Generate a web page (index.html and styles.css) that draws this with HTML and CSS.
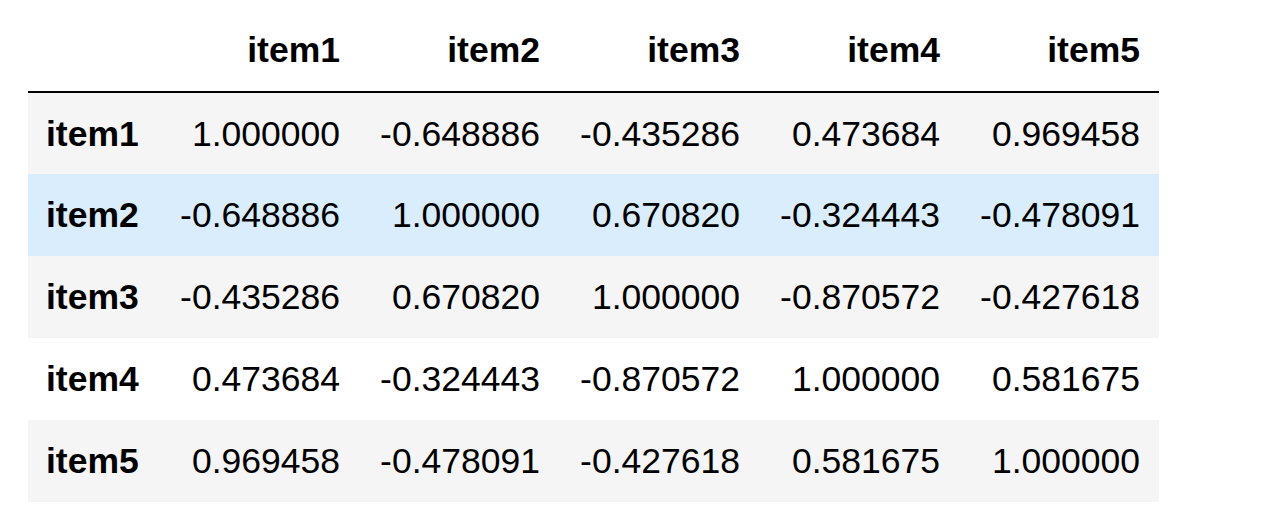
FILE: index.html
```html
<!DOCTYPE html>
<html>
<head>
<meta charset="utf-8">
<link rel="stylesheet" href="styles.css">
</head>
<body>
<div class="frame">
<table class="df">
  <colgroup>
    <col class="c-index">
    <col class="c-data"><col class="c-data"><col class="c-data"><col class="c-data"><col class="c-data">
  </colgroup>
  <thead>
    <tr>
      <th class="corner"></th>
      <th>item1</th>
      <th>item2</th>
      <th>item3</th>
      <th>item4</th>
      <th>item5</th>
    </tr>
  </thead>
  <tbody>
    <tr>
      <th>item1</th>
      <td>1.000000</td><td>-0.648886</td><td>-0.435286</td><td>0.473684</td><td>0.969458</td>
    </tr>
    <tr class="hover">
      <th>item2</th>
      <td>-0.648886</td><td>1.000000</td><td>0.670820</td><td>-0.324443</td><td>-0.478091</td>
    </tr>
    <tr>
      <th>item3</th>
      <td>-0.435286</td><td>0.670820</td><td>1.000000</td><td>-0.870572</td><td>-0.427618</td>
    </tr>
    <tr>
      <th>item4</th>
      <td>0.473684</td><td>-0.324443</td><td>-0.870572</td><td>1.000000</td><td>0.581675</td>
    </tr>
    <tr>
      <th>item5</th>
      <td>0.969458</td><td>-0.478091</td><td>-0.427618</td><td>0.581675</td><td>1.000000</td>
    </tr>
  </tbody>
</table>
</div>
</body>
</html>
```
FILE: styles.css
```css
html, body {
  margin: 0;
  padding: 0;
  background: #ffffff;
}

.frame {
  padding: 8px 0 0 28px;
}

.df {
  border-collapse: collapse;
  border-spacing: 0;
  table-layout: fixed;
  width: 1131px;
  font-family: "Liberation Sans", Arial, Helvetica, sans-serif;
  font-size: 35.5px;
  color: #000000;
}

.c-index {
  width: 131px;
}

.c-data {
  width: 200px;
}

.df th,
.df td {
  height: 82px;
  padding: 0 19px 0 0;
  text-align: right;
  vertical-align: middle;
  white-space: nowrap;
  line-height: 40px;
  box-sizing: border-box;
}

.df th {
  font-weight: bold;
}

.df thead th {
  height: 84px;
  border-bottom: 2px solid #000000;
}

.df tbody th {
  text-align: left;
  padding-left: 18px;
}

.df tbody tr:nth-child(odd) {
  background: #f5f5f5;
}

.df tbody tr.hover {
  background: #d9edfd;
}
```
